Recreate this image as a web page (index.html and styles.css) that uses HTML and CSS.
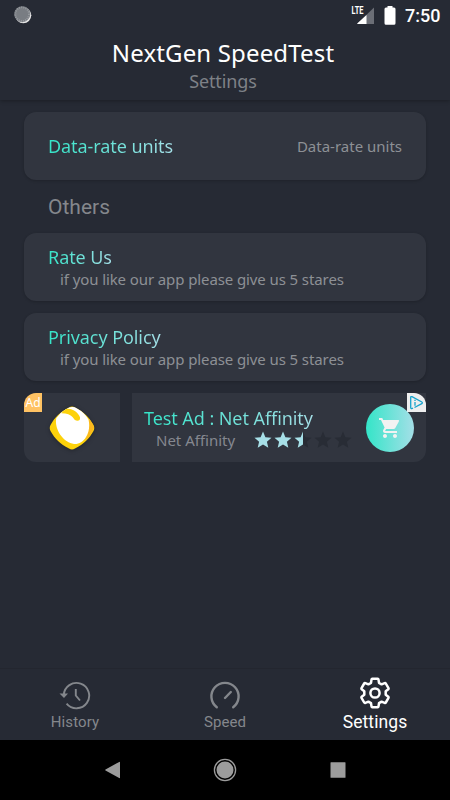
FILE: index.html
```html
<!DOCTYPE html>
<html lang="en">
<head>
    <meta charset="UTF-8">
    <meta name="viewport" content="width=device-width, initial-scale=1.0">
    <title>NextGen SpeedTest</title>
    <link rel="stylesheet" href="styles.css">
</head>
<body>
    <div class="screen">
        <header class="header">
            <div class="status-bar">
                <svg class="sync" width="18" height="18" viewBox="0 0 18 18">
                    <circle cx="9.3" cy="9.3" r="8" fill="#e6e6e6"/>
                    <circle cx="8.2" cy="8.2" r="8" fill="#797d83"/>
                    <circle cx="8.2" cy="8.2" r="6.8" fill="none" stroke="#989ba0" stroke-width="1.800" stroke-dasharray="1 1.2"/>
                </svg>
                <div class="status-icons">
                    <svg width="24" height="20" viewBox="0 0 24 20">
                        <path d="M23 1.500V18H6z" fill="#6b6e76"/>
                        <path d="M15.500 9V18H6.500q-.6-.3 0-.8z" fill="#fff"/>
                        <text class="lte" x="0.500" y="8.200" textLength="12" lengthAdjust="spacingAndGlyphs">LTE</text>
                    </svg>
                    <svg class="battery" width="12" height="20" viewBox="0 0 12 20">
                        <path d="M3.500 0h5v1.500H10A1.500 1.500 0 0 1 11.500 3v14.200A1.500 1.500 0 0 1 10 18.700H2a1.500 1.500 0 0 1-1.500-1.500V3A1.500 1.500 0 0 1 2 1.500h1.500z" fill="#fff"/>
                    </svg>
                    <span class="clock">7:50</span>
                </div>
            </div>
            <h1>NextGen SpeedTest</h1>
            <h2>Settings</h2>
        </header>

        <main class="content">
            <div class="card card-row">
                <span class="card-title">Data-rate units</span>
                <span class="card-value">Data-rate units</span>
            </div>

            <h3>Others</h3>

            <div class="card">
                <span class="card-title">Rate Us</span>
                <p>if you like our app please give us 5 stares</p>
            </div>

            <div class="card">
                <span class="card-title">Privacy Policy</span>
                <p>if you like our app please give us 5 stares</p>
            </div>

            <div class="ad">
                <div class="ad-logo">
                    <span class="ad-badge">Ad</span>
                    <svg class="logo" width="46" height="46" viewBox="0 0 46 46">
                        <path d="M20 2.500Q23 .3 26 2.500C35 7 40 12 44.500 20Q46 23 44.500 26C40 34 35 39 26 43.500Q23 45.500 20 43.500C11 39 6 34 1.500 26Q0 23 1.500 20C6 12 11 7 20 2.500z" fill="#fdd20b"/>
                        <path d="M39.500 13Q43.500 18 45 22Q43 29 36 36Q42 24 39.500 13z" fill="#fbb81f"/>
                        <path d="M17 4.200Q23 .2 28 3.500Q35.500 7.500 39.500 14.500C41 21 40 27.500 37 32C34 37 30 39.300 25 39C14 37.500 5 24 7.300 13Q11 7.500 17 4.200z" fill="#fff"/>
                        <path d="M17 4.200C22 2.500 29 7 31 12.300Q31.500 16 28 15.800Q25.500 15.500 23.500 12C21.500 9.500 18 8.500 12.500 8.200Q13.500 6 17 4.200z" fill="#fdd20b"/>
                    </svg>
                </div>
                <div class="ad-body">
                    <div class="ad-text">
                        <span class="card-title">Test Ad : Net Affinity</span>
                        <div class="ad-info">
                            <span>Net Affinity</span>
                            <svg class="stars" width="100" height="20" viewBox="0 0 100 20">
                                <defs>
                                    <path id="star" d="M10 1.500l2.400 5.700 6.100.5-4.600 4 1.400 6L10 14.500l-5.300 3.200 1.400-6-4.600-4 6.100-.5z"/>
                                    <clipPath id="half"><path d="M0 0h10v20H0z"/></clipPath>
                                </defs>
                                <g fill="#282c35">
                                    <use href="#star" x="40"/>
                                    <use href="#star" x="60"/>
                                    <use href="#star" x="80"/>
                                </g>
                                <g fill="#a7e0e8">
                                    <use href="#star"/>
                                    <use href="#star" x="20"/>
                                    <g transform="translate(40)"><use href="#star" clip-path="url(#half)"/></g>
                                </g>
                            </svg>
                        </div>
                    </div>
                    <div class="cart">
                        <svg width="24" height="24" viewBox="0 0 24 24">
                            <path fill="#f2f2f2" d="M7 18c-1.100 0-1.990.9-1.990 2S5.900 22 7 22s2-.9 2-2-.9-2-2-2zM1 2v2h2l3.600 7.590-1.350 2.450c-.16.28-.25.61-.25.96 0 1.100.9 2 2 2h12v-2H7.420c-.14 0-.25-.11-.25-.25l.03-.12.9-1.630h7.450c.75 0 1.410-.41 1.750-1.030l3.580-6.490A1 1 0 0 0 20 4H5.210l-.94-2H1zm16 16c-1.100 0-1.990.9-1.990 2s.89 2 1.990 2 2-.9 2-2-.9-2-2-2z"/>
                            <path fill="#f2f2f2" d="M5.200 4h15l-4 7H8.100z"/>
                        </svg>
                    </div>
                    <div class="ad-choices">
                        <svg width="15" height="15" viewBox="0 0 15 15" fill="none" stroke="#17a3cc" stroke-width="1.300">
                            <path d="M4 13.200L2.800 13.700Q1.700 13.700 1.700 12.500V2.500Q1.700 1.200 3 1.700L12.800 7Q14 7.800 12.800 8.700L5.500 12.500"/>
                            <path d="M6 7v3.800M6 4.800v1.200"/>
                        </svg>
                    </div>
                </div>
            </div>
        </main>

        <nav class="tabs">
            <div class="tab">
                <svg width="32" height="30" viewBox="0 0 32 30" fill="none" stroke="currentColor" stroke-width="1.900">
                    <path d="M4.800 14A12.700 12.700 0 1 1 7.600 22.600"/>
                    <path d="M.5 12.500h8.500L5 17z" fill="currentColor" stroke="none"/>
                    <path d="M16.800 8v6.500l4.200 5"/>
                </svg>
                <span>History</span>
            </div>
            <div class="tab">
                <svg width="32" height="30" viewBox="0 0 32 30" fill="none" stroke="currentColor" stroke-width="2.400" stroke-linecap="round">
                    <path d="M7.800 26.300A13.600 13.600 0 1 1 24.200 26.300"/>
                    <path d="M16 17l5.800-6"/>
                </svg>
                <span>Speed</span>
            </div>
            <div class="tab active">
                <svg width="32" height="32" viewBox="0 0 32 32" fill="none" stroke="currentColor" stroke-width="2.500" stroke-linejoin="round">
                    <path d="M13.300 1.800h5.400q.7 0 .8.800l.5 3.200 2.600 1.500 3-1.200q.8-.3 1.200.4l2.700 4.600q.4.700-.2 1.200l-2.600 2v3.400l2.600 2q.6.500.2 1.200l-2.700 4.600q-.4.700-1.200.4l-3-1.200-2.600 1.500-.5 3.200q-.1.800-.8.800h-5.400q-.7 0-.8-.8l-.5-3.200-2.600-1.500-3 1.200q-.8.300-1.200-.4l-2.700-4.600q-.4-.7.200-1.200l2.600-2v-3.400l-2.600-2q-.6-.5-.2-1.200l2.700-4.600q.4-.7 1.200-.4l3 1.200L12 5.800l.5-3.200q.1-.8.800-.8z"/>
                    <circle cx="16" cy="16" r="4.600"/>
                </svg>
                <span>Settings</span>
            </div>
        </nav>

        <div class="system-nav">
            <svg width="30" height="30" viewBox="0 0 30 30">
                <path d="M22 7.200v15.600q0 .7-.8.300L7.500 15.500q-.6-.5 0-1L21.200 6.900q.8-.4.800.3z" fill="#9c9c9c"/>
            </svg>
            <svg width="30" height="30" viewBox="0 0 30 30">
                <circle cx="15" cy="15" r="10.600" fill="none" stroke="#9c9c9c" stroke-width="1.300"/>
                <circle cx="15" cy="15" r="8.500" fill="#9c9c9c"/>
            </svg>
            <svg width="30" height="30" viewBox="0 0 30 30">
                <rect x="7.500" y="7.300" width="15" height="15.500" rx=".5" fill="#9c9c9c"/>
            </svg>
        </div>
    </div>
</body>
</html>
```

FILE: styles.css
```css
* {
    box-sizing: border-box;
}
body {
    margin: 0;
    background-color: #262a34;
    font-family: "Noto Sans", sans-serif;
    color: #8d9095;
}
h1, h2, h3, p {
    margin: 0;
    font-weight: 400;
}
svg {
    display: block;
    flex: none;
}
.screen {
    width: 450px;
    height: 800px;
    display: flex;
    flex-direction: column;
    overflow: hidden;
}
.header {
    height: 100px;
    text-align: center;
    box-shadow: 0 1px 4px rgba(0,0,0,0.3);
}
.status-bar {
    height: 36px;
    padding: 6px 10px 0 14px;
    display: flex;
    justify-content: space-between;
}
.status-icons {
    display: flex;
    color: white;
}
.lte {
    font: 700 10px Roboto, sans-serif;
    fill: white;
}
.battery {
    margin-left: 9px;
}
.clock {
    width: 35px;
    margin-left: 9px;
    font: 500 18px/20px Roboto, sans-serif;
}
h1 {
    padding-right: 4px;
    font-size: 24px;
    line-height: 34px;
    letter-spacing: 0.15px;
    color: white;
}
h2 {
    padding-right: 4px;
    font-size: 18px;
    line-height: 22px;
    letter-spacing: -0.1px;
    color: #7e8187;
}
.content {
    flex: 1;
    padding: 12px 24px 0;
}
.card {
    height: 68px;
    margin-bottom: 12px;
    padding: 12px 24px 0;
    border-radius: 12px;
    background-color: #31353f;
    box-shadow: 0 1px 3px rgba(0,0,0,0.2);
}
.card-row {
    margin-bottom: 0;
    padding-top: 0;
    display: flex;
    align-items: center;
    justify-content: space-between;
}
.card-title {
    display: block;
    width: fit-content;
    font-size: 18px;
    line-height: 24px;
    letter-spacing: -0.07px;
    color: transparent;
    background: linear-gradient(90deg, #34e5c8, #a4dfe7);
    background-clip: text;
    -webkit-background-clip: text;
}
.card-value {
    font-size: 15px;
}
.card p {
    padding-left: 12px;
    font-size: 15px;
    line-height: 20px;
    letter-spacing: -0.1px;
}
h3 {
    height: 53px;
    padding-left: 24px;
    font: 400 21px/55px Roboto, sans-serif;
    color: #84878c;
}
.ad {
    height: 69px;
    display: flex;
    gap: 12px;
}
.ad-logo {
    position: relative;
    width: 96px;
    display: flex;
    align-items: center;
    justify-content: center;
    border-radius: 12px 0 0 12px;
    background-color: #31353f;
}
.logo {
    filter: drop-shadow(0 1px 2px rgba(0,0,0,0.3));
}
.ad-badge {
    position: absolute;
    top: 0;
    left: 0;
    width: 18px;
    height: 19px;
    border-top-left-radius: 12px;
    background-color: #ffc263;
    color: white;
    font-size: 12px;
    line-height: 19px;
    text-align: center;
}
.ad-body {
    position: relative;
    flex: 1;
    padding: 0 12px;
    display: flex;
    align-items: center;
    justify-content: space-between;
    border-radius: 0 0 12px 0;
    background-color: #31353f;
}
.ad-info {
    display: flex;
    align-items: center;
    padding-left: 12px;
    font-size: 15px;
    line-height: 20px;
    color: #858890;
    white-space: nowrap;
}
.stars {
    margin-left: 18px;
}
.cart {
    flex: none;
    width: 48px;
    height: 48px;
    display: flex;
    align-items: center;
    justify-content: center;
    border-radius: 50%;
    background: linear-gradient(90deg, #34e5c8, #a4dfe7);
}
.ad-choices {
    position: absolute;
    top: 0;
    right: 0;
    width: 19px;
    height: 19px;
    padding: 2px;
    border-top-right-radius: 12px;
    background-color: #eee;
}
.tabs {
    height: 72px;
    display: flex;
    border-top: 1px solid #23262f;
    font: 400 15px/20px Roboto, sans-serif;
    color: #84878c;
}
.tab {
    flex: 1;
    display: flex;
    flex-direction: column;
    align-items: center;
    justify-content: flex-end;
    gap: 1px;
    padding-bottom: 8px;
    letter-spacing: 0.1px;
}
.active {
    padding-bottom: 8px;
    font-size: 17.500px;
    gap: 3px;
    color: white;
}
.system-nav {
    height: 60px;
    display: flex;
    align-items: center;
    justify-content: center;
    gap: 82.500px;
    background-color: black;
}
```
